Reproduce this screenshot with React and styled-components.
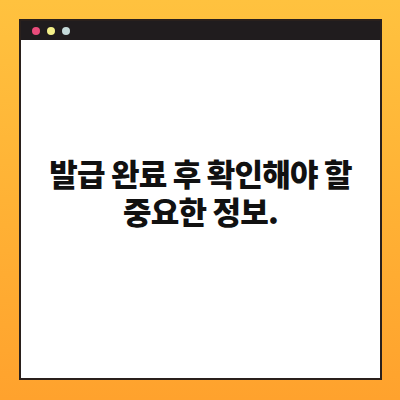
import React from "react";
import styled, { createGlobalStyle } from "styled-components";

const Global = createGlobalStyle`
  html, body { margin: 0; padding: 0; }
  body { width: 400px; height: 400px; overflow: hidden; }
`;

const Page = styled.div`
  width: 400px;
  height: 400px;
  box-sizing: border-box;
  padding: 19px 18px 20px 19px;
  background: linear-gradient(180deg, #ffc23f 0%, #ffb235 50%, #ffa22d 100%);
  display: flex;
`;

const Window = styled.div`
  flex: 1;
  display: flex;
  flex-direction: column;
  background: #ffffff;
  border: 2px solid #2a201c;
  box-sizing: border-box;
`;

const TitleBar = styled.div`
  height: 19px;
  background: #201c1e;
  display: flex;
  align-items: center;
  gap: 7px;
  padding-left: 11px;
`;

const Dot = styled.span`
  width: 8px;
  height: 8px;
  border-radius: 50%;
  background: ${(p) => p.$color};
`;

const Body = styled.div`
  flex: 1;
  display: flex;
  align-items: center;
  justify-content: center;
  padding-bottom: 34px;
`;

const Title = styled.h1`
  margin: 0;
  font-family: "Noto Sans CJK KR", "Noto Sans", sans-serif;
  font-weight: 900;
  font-size: 31px;
  line-height: 38px;
  letter-spacing: -0.8px;
  color: #111111;
  text-align: center;
`;

export default function App() {
  return (
    <>
      <Global />
      <Page>
        <Window>
          <TitleBar>
            <Dot $color="#ea4c7c" />
            <Dot $color="#f4f08a" />
            <Dot $color="#c5dada" />
          </TitleBar>
          <Body>
            <Title>
              발급 완료 후 확인해야 할
              <br />
              중요한 정보.
            </Title>
          </Body>
        </Window>
      </Page>
    </>
  );
}
